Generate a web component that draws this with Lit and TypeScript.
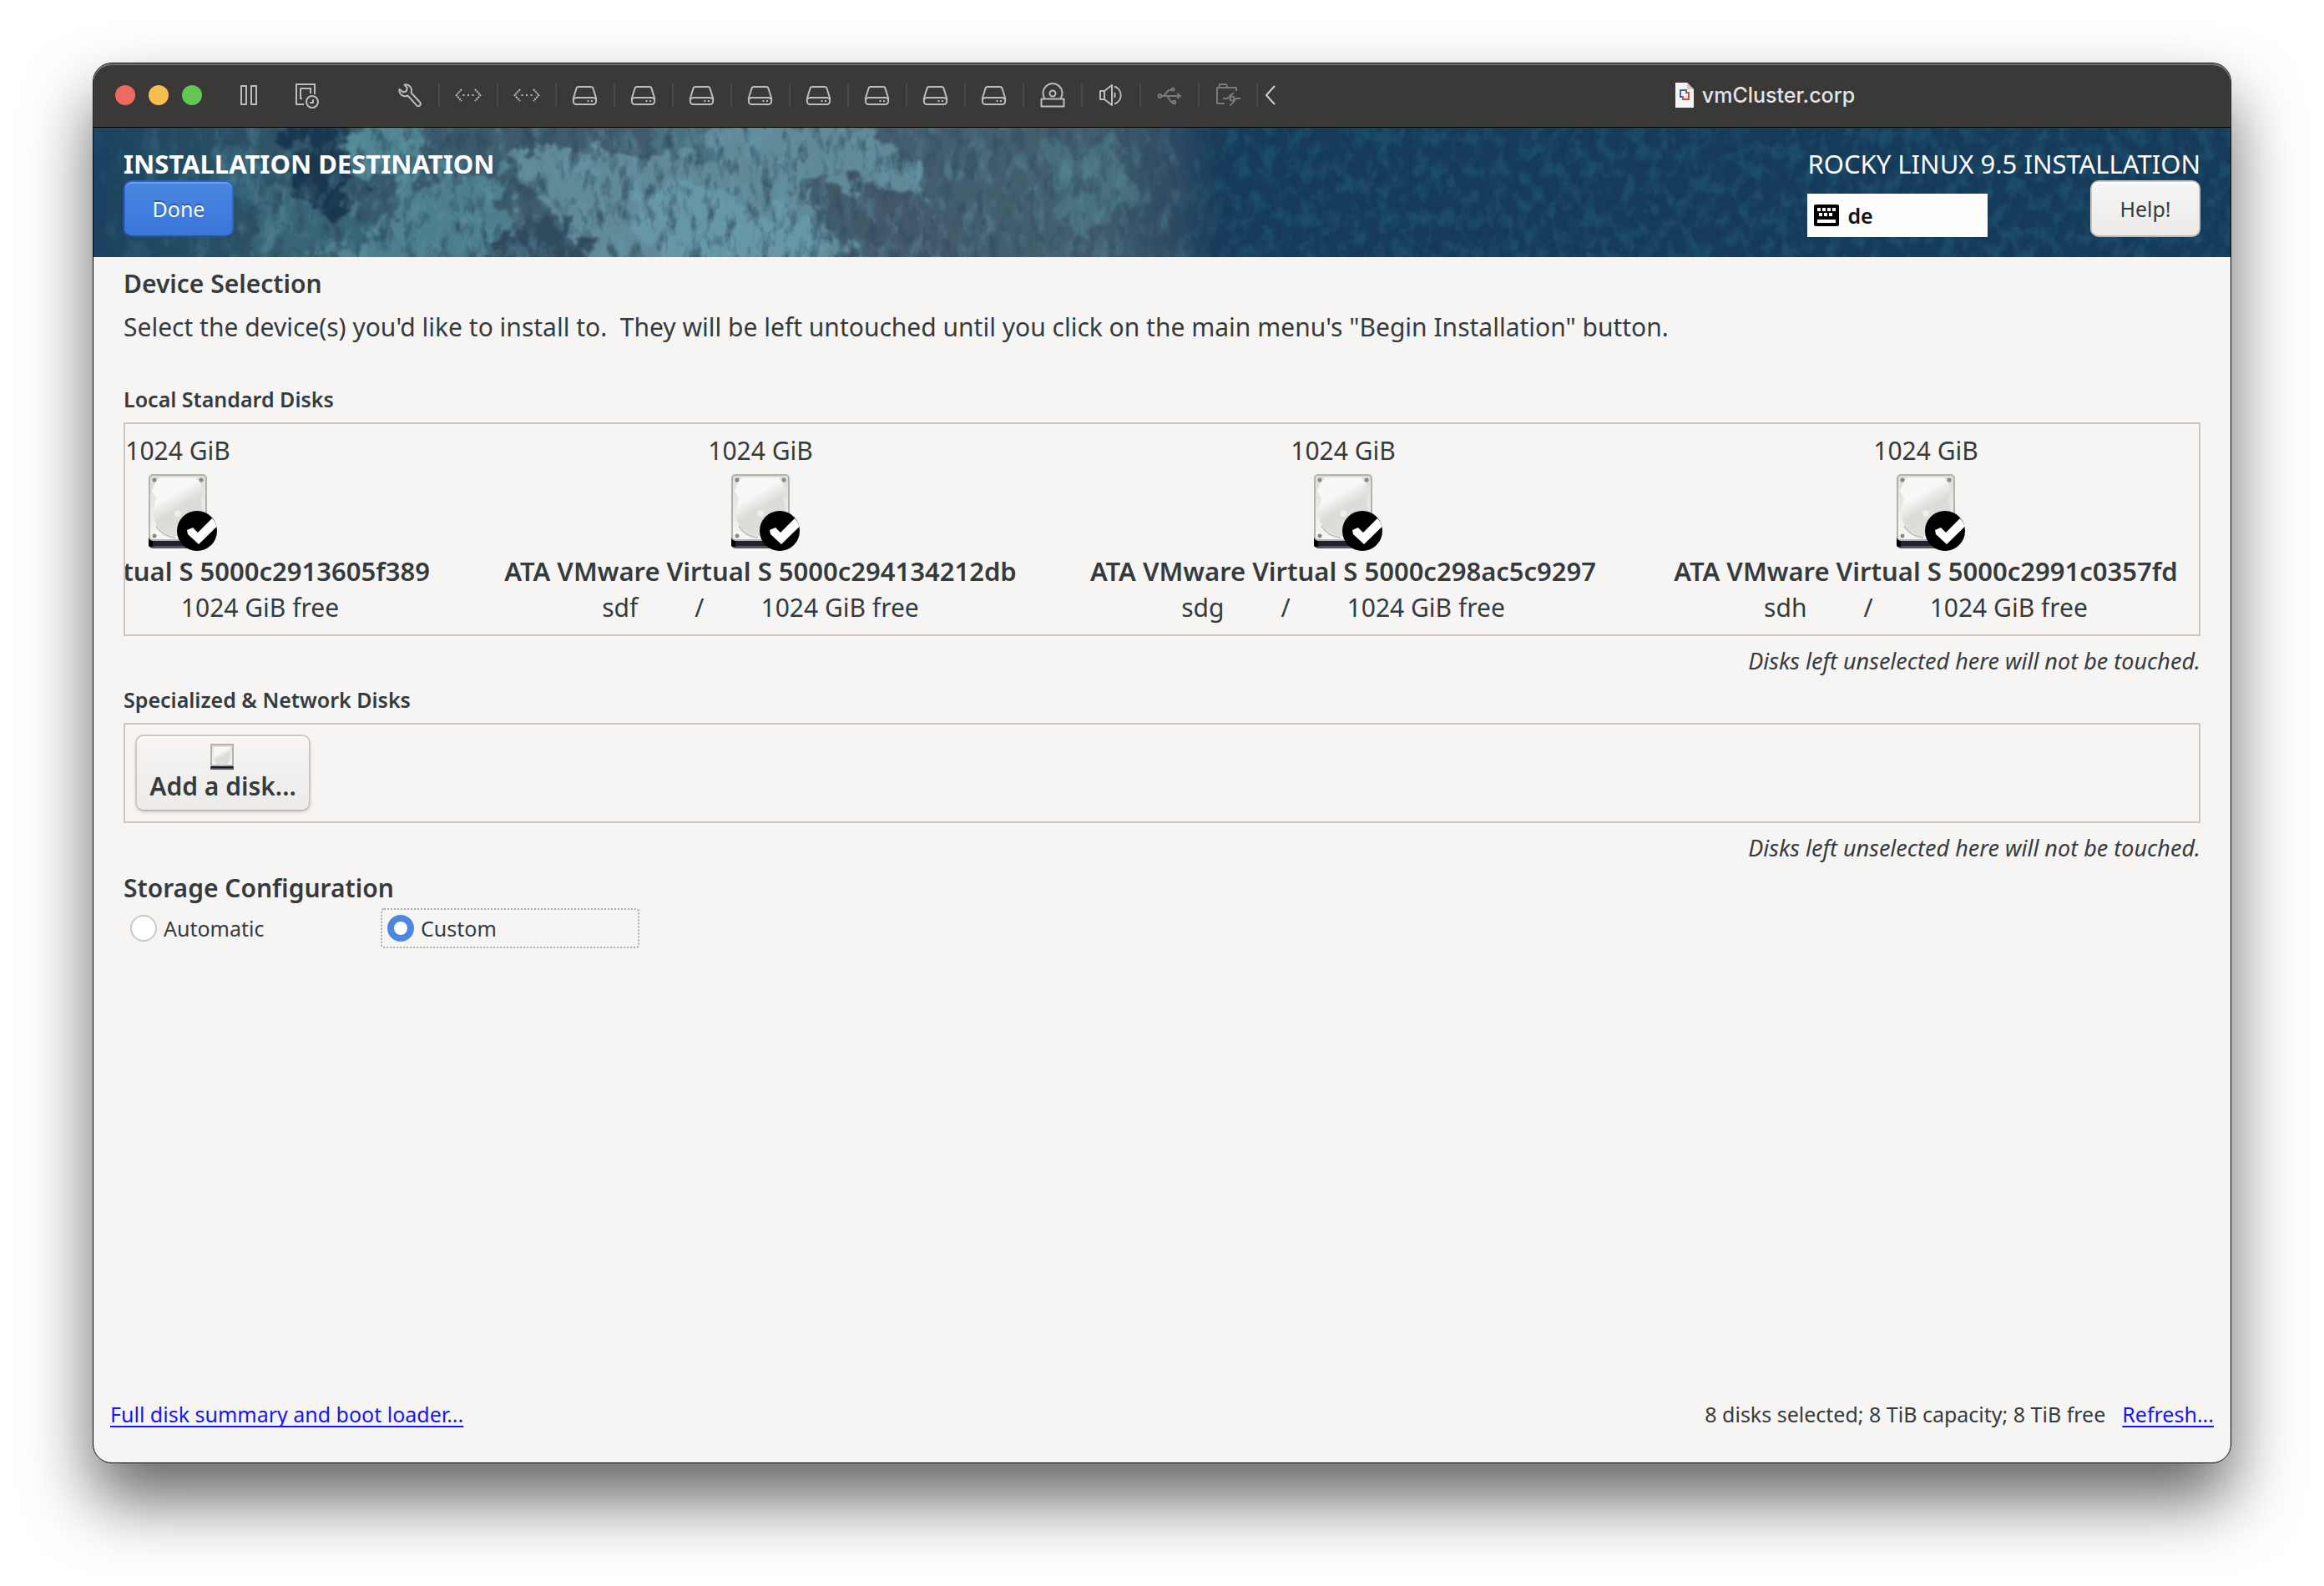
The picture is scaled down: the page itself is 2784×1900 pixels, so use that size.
import { LitElement, html, css, svg, TemplateResult } from "lit";
import { customElement, property, state } from "lit/decorators.js";

interface Disk {
  size: string;
  model: string;
  device: string;
  free: string;
}

const DISKS: Disk[] = [
  { size: "1024 GiB", model: "ATA VMware Virtual S 5000c2913605f389", device: "sde", free: "1024 GiB free" },
  { size: "1024 GiB", model: "ATA VMware Virtual S 5000c294134212db", device: "sdf", free: "1024 GiB free" },
  { size: "1024 GiB", model: "ATA VMware Virtual S 5000c298ac5c9297", device: "sdg", free: "1024 GiB free" },
  { size: "1024 GiB", model: "ATA VMware Virtual S 5000c2991c0357fd", device: "sdh", free: "1024 GiB free" },
];

const ICONS: Record<string, TemplateResult> = {
  pause: svg`<path d="M7 5h6v22H7zM19 5h6v22h-6z"/>`,
  snapshot: svg`<path d="M12 27H3V3h22v12"/><path d="M10 20H8V8h12v6"/><circle cx="22" cy="24" r="7"/><path d="M23 21v4h-4"/>`,
  wrench: svg`<path d="M9.500 3.500a7 7 0 0 1 8 9.500l10.500 11.500a2.600 2.600 0 0 1-3.800 3.800L13.500 16.500a7 7 0 0 1-10-7.500l4.500 3.500 3.800-1.300 1-4z"/>`,
  network: svg`<path d="M8 9l-6.500 7L8 23M24 9l6.500 7L24 23" stroke-dasharray="2 1"/><path d="M9.500 16h2M15 16h2M20.500 16h2"/>`,
  disk: svg`<path d="M8 6h15a2.500 2.500 0 0 1 2.500 2l3.600 11.500v4a3.500 3.500 0 0 1-3.500 3.500H5.400a3.500 3.500 0 0 1-3.500-3.500v-4L5.500 8A2.500 2.500 0 0 1 8 6z"/><path d="M2.500 21c.5-1.500 1.500-2 3-2h20c1.500 0 2.500.5 3 2"/><path d="M18.500 23h2M23 23h2"/>`,
  optical: svg`<path d="M6.500 20a11.500 11.500 0 1 1 19 0"/><circle cx="16" cy="14" r="3.500"/><path d="M2.500 20.500h27v9h-27z"/>`,
  sound: svg`<path d="M3 11h5v10H3zM8 11l9-7v24l-9-7"/><path d="M20.500 13v6"/><path d="M20 5.500a11 11 0 0 1 0 21"/>`,
  usb: svg`<path d="M5 17h22M9 17l6-7h4M13 17l5 7h3"/><circle cx="4.500" cy="17" r="2"/><circle cx="20" cy="9" r="1.500"/><path d="M25 14l4 3-4 3M20 23h3v3h-3z"/>`,
  folder: svg`<path d="M12 26H3V7h2l1-4h8l1.500 4H26v4"/><path d="M3 7h12"/><path d="M10 20h5c3 0 3-6 8-6M31 20h-5c-2 0-3 7-8 8"/><circle cx="21" cy="20" r="2.500"/>`,
};

@customElement("tool-icon")
export class ToolIcon extends LitElement {
  @property() name = "disk";

  static styles = css`
    :host { display: block; width: 32px; height: 32px; }
    .icon { display: block; width: 32px; height: 32px; fill: none; stroke: currentColor; stroke-width: 2; stroke-linejoin: round; }
  `;

  render() {
    return html`<svg class="icon" viewBox="0 0 32 32" aria-hidden="true">${ICONS[this.name]}</svg>`;
  }
}

@customElement("drive-icon")
export class DriveIcon extends LitElement {
  @property({ type: Boolean }) checked = false;

  static styles = css`
    :host { display: block; width: 96px; height: 96px; }
    :host([small]) { width: 32px; height: 32px; }
    .icon { display: block; width: 100%; height: 100%; }
  `;

  private large() {
    return svg`
      <rect x="13" y="6" width="70" height="87" rx="5" fill="#55535a"/>
      <rect x="13" y="78" width="6" height="13" rx="2" fill="#000"/>
      <rect x="18" y="84" width="60" height="6" fill="#241f31"/>
      <rect x="14" y="5" width="68" height="78" rx="4" fill="url(#shell)" stroke="#b4b2ae" stroke-width="2"/>
      <path d="M26 8h44l5 7 4 9-4 9 3 14a30 30 0 0 1-60 3l4-17-5-9 5-12z" fill="url(#cover)"/>
      <path d="M22 66a30 30 0 0 0 23 14" fill="none" stroke="#c4c2be" stroke-width="2"/>
      <circle cx="48" cy="51" r="4" fill="#efeeec"/>
      <circle cx="20" cy="11" r="2.500" fill="#8a8885"/>
      <circle cx="76" cy="11" r="2.500" fill="#8a8885"/>
      <circle cx="20" cy="78" r="2.500" fill="#8a8885"/>
      ${this.checked
        ? svg`<circle cx="71" cy="72" r="24" fill="#000"/>
            <path d="M59 71l7-3 6 6 17-17c3 3 4.500 6 5.500 10L73 88 60 76z" fill="#fff"/>`
        : null}`;
  }

  private little() {
    return svg`
      <rect x="7" y="2" width="28" height="30" fill="#55535a"/>
      <rect x="8" y="28" width="26" height="2" fill="#1a1626"/>
      <rect x="8" y="2" width="26" height="25" fill="url(#shell)" stroke="#b4b2ae" stroke-width="2"/>
      <path d="M11 5h20v13a10 9 0 0 1-20 0z" fill="url(#cover)"/>`;
  }

  render() {
    const small = this.hasAttribute("small");
    return html`<svg class="icon" viewBox=${small ? "6 0 32 32" : "0 0 96 96"} aria-hidden="true">
      <defs>
        <linearGradient id="shell" x1="0" y1="0" x2="0" y2="1">
          <stop offset="0" stop-color="#dedcd9"/><stop offset="1" stop-color="#f8f7f6"/>
        </linearGradient>
        <linearGradient id="cover" x1="0.200" y1="0" x2="0.700" y2="1">
          <stop offset="0.300" stop-color="#f8f8f7"/><stop offset="0.550" stop-color="#dcdbd8"/><stop offset="1" stop-color="#e0dfdc"/>
        </linearGradient>
      </defs>
      ${small ? this.little() : this.large()}
    </svg>`;
  }
}

/* Satellite-style artwork behind the installer header. */
@customElement("banner-art")
export class BannerArt extends LitElement {
  static styles = css`
    :host { display: block; }
    .art { display: block; width: 100%; height: 100%; }
  `;

  render() {
    return html`<svg class="art" viewBox="0 0 2560 155" preserveAspectRatio="none" aria-hidden="true">
      <defs>
        <filter id="sea" x="0" y="0" width="100%" height="100%" color-interpolation-filters="sRGB">
          <feTurbulence type="fractalNoise" baseFrequency="0.065 0.050" numOctaves="3" seed="8"/>
          <feColorMatrix values="0 0 0 0 0.125  0 0 0 0 0.350  0 0 0 0 0.450  3 0 0 0 -1.200"/>
        </filter>
        <filter id="grain" x="0" y="0" width="100%" height="100%" color-interpolation-filters="sRGB">
          <feTurbulence type="fractalNoise" baseFrequency="0.070 0.035" numOctaves="4" seed="21"/>
          <feColorMatrix values="0 0 0 0 0.180  0 0 0 0 0.280  0 0 0 0 0.360  3 0 0 0 -1.450"/>
        </filter>
        <filter id="shine" x="0" y="0" width="100%" height="100%" color-interpolation-filters="sRGB">
          <feTurbulence type="fractalNoise" baseFrequency="0.050 0.030" numOctaves="5" seed="4"/>
          <feColorMatrix values="0 0 0 0 0.400  0 0 0 0 0.620  0 0 0 0 0.680  3.500 0 0 0 -1.650"/>
        </filter>
        <filter id="coast" x="-10%" y="-30%" width="120%" height="160%" color-interpolation-filters="sRGB">
          <feTurbulence type="fractalNoise" baseFrequency="0.030 0.035" numOctaves="6" seed="12"/>
          <feDisplacementMap in="SourceGraphic" scale="80" xChannelSelector="R" yChannelSelector="G"/>
          <feGaussianBlur stdDeviation="1.500"/>
        </filter>
        <linearGradient id="land" x1="0" x2="1" y1="0" y2="0">
          <stop offset="0" stop-color="#1b4160"/>
          <stop offset="0.080" stop-color="#234c63"/>
          <stop offset="0.200" stop-color="#355a6c"/>
          <stop offset="0.500" stop-color="#435c6c"/>
          <stop offset="0.880" stop-color="#425f6e"/>
          <stop offset="0.960" stop-color="#2b4862"/>
          <stop offset="1" stop-color="#163a59" stop-opacity="0"/>
        </linearGradient>
        <linearGradient id="fade" x1="0" x2="1" y1="0" y2="0">
          <stop offset="0" stop-color="#fff" stop-opacity="0.150"/>
          <stop offset="0.150" stop-color="#fff" stop-opacity="0.700"/>
          <stop offset="0.700" stop-color="#fff" stop-opacity="0.700"/>
          <stop offset="0.930" stop-color="#fff" stop-opacity="0.500"/>
          <stop offset="1" stop-color="#fff" stop-opacity="0"/>
        </linearGradient>
        <mask id="landmask"><rect width="1380" height="155" fill="url(#fade)"/></mask>
      </defs>
      <rect width="2560" height="155" fill="#163a59"/>
      <rect width="2560" height="155" filter="url(#sea)" opacity="0.600"/>
      <rect width="1360" height="155" fill="url(#land)"/>
      <g filter="url(#coast)">
        <path d="M145 20l40-5 20 40-10 50-40-30z" fill="#33637a"/>
        <path d="M190 60l90 10 70 60-40 40H190z" fill="#386577"/>
        <path d="M230-20l60 0 40 50-20 60-70 10z" fill="#19374f"/>
        <path d="M310-10h70l20 50-40 30-60-20z" fill="#4f8493"/>
        <path d="M370 60l110 0 30 50-20 60H260l60-40 50-20z" fill="#4d7f8d"/>
        <path d="M490 30l90-10 90 25 90-50h170l60 70 10 30-110-20-50 0 30 40 60 60H610l-20-50-50-30-40-50z" fill="#608a98"/>
        <path d="M640 70l120 10 80 30 70 60H680z" fill="#6797a7"/>
        <path d="M500 120l80-20 20 80H430z" fill="#304b5e"/>
        <path d="M680-20l90 0-30 50-80 0z" fill="#49707f"/>
        <path d="M840 60l110 10 90 50-10 50-100-10-20-50z" fill="#43596a"/>
        <path d="M1150 20l90 10 10 60-70 50-40-40z" fill="#48707d"/>
      </g>
      <g mask="url(#landmask)">
        <rect width="1380" height="155" filter="url(#shine)" opacity="0.550"/>
        <rect width="1380" height="155" filter="url(#grain)"/>
      </g>
    </svg>`;
  }
}

@customElement("app-root")
export class AppRoot extends LitElement {
  @state() private mode: "automatic" | "custom" = "custom";

  static styles = css`
    :host {
      display: flex;
      box-sizing: border-box;
      min-height: 100vh;
      padding: 75px 111px 147px;
      background: #fff;
      color: #353b3d;
      font-family: "Noto Sans", "Open Sans", sans-serif;
      font-size: 30px;
      line-height: 40px;
    }
    * { box-sizing: border-box; }
    button { font: inherit; color: inherit; margin: 0; padding: 0; border: 0; background: none; }
    h1, h2, h3, p { margin: 0; }

    .window {
      flex: 1;
      min-width: 0;
      display: flex;
      flex-direction: column;
      border: 1px solid #0a0a0a;
      border-radius: 23px;
      background: #f6f5f4;
      overflow: hidden;
      box-shadow: 0 44px 80px rgba(0, 0, 0, 0.6);
    }

    .titlebar {
      display: flex;
      align-items: center;
      height: 77px;
      padding-left: 26px;
      background: #3a3937;
      border-bottom: 1px solid #000;
      border-radius: 22px 22px 0 0;
      box-shadow: inset 0 2px 0 #70716e, inset 1px 0 0 #555553, inset -1px 0 0 #555553;
      color: #bebdbb;
    }
    .lights { display: flex; gap: 16px; margin-right: 40px; }
    .light { width: 24px; height: 24px; border-radius: 50%; }
    .close { background: #ed6a5f; }
    .minimize { background: #f5bf4f; }
    .zoom { background: #62c655; }
    .actions { display: flex; gap: 38px; margin-right: 73px; }
    .tools { display: flex; }
    .tool { width: 70px; height: 28px; display: flex; align-items: center; justify-content: center; border-right: 2px solid #4a4947; }
    .dim { color: #7b7a78; }
    .more { margin-left: 8px; width: 14px; height: 24px; }
    .chevron { display: block; width: 14px; height: 24px; fill: none; stroke: #d4d3d1; stroke-width: 2; }
    .caption {
      flex: 1;
      display: flex;
      align-items: center;
      justify-content: center;
      gap: 10px;
      padding-left: 28px;
      font: 500 25px/32px Inter, "Liberation Sans", sans-serif;
      color: #e6e5e3;
    }
    .file { width: 22px; height: 30px; }

    .banner {
      position: relative;
      display: flex;
      justify-content: space-between;
      height: 155px;
      padding: 23px 36px 0;
      color: #fff;
      font-size: 31px;
    }
    .art { position: absolute; inset: 0; }
    .side { position: relative; display: flex; flex-direction: column; align-items: flex-start; }
    .heading { font-size: 31px; font-weight: 700; line-height: 40px; }
    .row { align-self: stretch; display: flex; justify-content: space-between; align-items: flex-end; }
    .btn {
      display: flex;
      align-items: center;
      justify-content: center;
      min-width: 132px;
      height: 68px;
      border: 2px solid #cdc7c2;
      border-bottom-color: #bfb8b1;
      border-radius: 10px;
      background: linear-gradient(#f6f5f4, #edebe9);
      box-shadow: inset 0 2px 0 #fff;
      color: #353b3d;
      font-size: 25px;
    }
    .primary {
      border-color: #2a66c4;
      border-bottom-color: #23559f;
      background: linear-gradient(#4a86e2, #3a76da);
      box-shadow: inset 0 2px 0 #6c9fe8;
      color: #fff;
      text-shadow: 0 -2px 0 rgba(20, 50, 110, 0.5);
    }
    .layout {
      display: flex;
      align-items: center;
      gap: 10px;
      width: 216px;
      height: 52px;
      padding: 0 8px;
      background: #fdfdfd;
      color: #111;
      font-size: 25px;
      font-weight: 600;
    }
    .keyboard { width: 30px; height: 26px; }

    .content { flex: 1; display: flex; flex-direction: column; padding: 12px 36px 0; }
    .section { font-size: 30px; font-weight: 600; line-height: 40px; }
    .lead { margin-top: 12px; white-space: pre-wrap; }
    .group { font-size: 25px; font-weight: 600; line-height: 32px; }
    .first { margin-top: 50px; }
    .next { margin-top: 12px; }
    .note { margin-top: 12px; text-align: right; font-size: 27px; font-style: italic; line-height: 36px; }
    .frame { display: flex; margin-top: 12px; padding: 12px; border: 2px solid #cdc7c2; overflow: hidden; }
    .disks { justify-content: flex-end; gap: 84px; padding-right: 20px; }
    .disk { flex: none; width: 614px; display: flex; flex-direction: column; align-items: center; line-height: 40px; }
    .drive { margin: 4px 0; }
    .model { font-size: 31px; font-weight: 600; white-space: nowrap; }
    .facts { display: flex; gap: 68px; margin-top: 4px; }
    .add {
      flex-direction: column;
      min-width: 210px;
      height: 92px;
      padding: 0 14px;
      font-size: 30px;
      font-weight: 600;
      box-shadow: inset 0 2px 0 #fff, 0 2px 4px rgba(0, 0, 0, 0.1);
    }
    .storage { margin-top: 10px; }
    .modes { display: grid; grid-template-columns: 308px 310px; margin-top: 4px; }
    .mode {
      display: flex;
      align-items: center;
      gap: 8px;
      height: 48px;
      padding: 0 6px;
      border: 2px dashed transparent;
      border-radius: 4px;
      font-size: 25px;
    }
    .focused { border: 2px dotted #a9adad; }
    .radio {
      appearance: none;
      width: 32px;
      height: 32px;
      margin: 0;
      border: 2px solid #cdc7c2;
      border-radius: 50%;
      background: #fff;
      outline: none;
    }
    .radio:checked { border: 8px solid #4b87df; }

    .footer { display: flex; align-items: center; gap: 20px; padding: 0 20px 42px; font-size: 25px; line-height: 32px; }
    .status { margin-left: auto; }
    .link { color: #1414ff; text-decoration: underline 2px; text-underline-offset: 4px; text-decoration-skip-ink: none; }
  `;

  private tool(name: string, label: string, dim = false) {
    return html`<button class="tool ${dim ? "dim" : ""}" aria-label=${label}><tool-icon name=${name}></tool-icon></button>`;
  }

  private radio(value: "automatic" | "custom", label: string) {
    const on = this.mode === value;
    return html`<label class="mode ${on ? "focused" : ""}">
      <input class="radio" type="radio" name="mode" .checked=${on} @change=${() => (this.mode = value)}>${label}
    </label>`;
  }

  render() {
    return html`<main class="window">
      <header class="titlebar">
        <div class="lights">
          <button class="light close" aria-label="Close"></button>
          <button class="light minimize" aria-label="Minimize"></button>
          <button class="light zoom" aria-label="Zoom"></button>
        </div>
        <div class="actions">
          <button aria-label="Pause"><tool-icon name="pause"></tool-icon></button>
          <button aria-label="Snapshots"><tool-icon name="snapshot"></tool-icon></button>
        </div>
        <div class="tools">
          ${this.tool("wrench", "Settings")}
          ${[1, 2].map((n) => this.tool("network", `Network adapter ${n}`))}
          ${[1, 2, 3, 4, 5, 6, 7, 8].map((n) => this.tool("disk", `Hard disk ${n}`))}
          ${this.tool("optical", "CD/DVD")}
          ${this.tool("sound", "Sound")}
          ${this.tool("usb", "USB", true)}
          ${this.tool("folder", "Shared folders", true)}
        </div>
        <button class="more" aria-label="Collapse toolbar">
          <svg class="chevron" viewBox="0 0 14 24"><path d="M12 1L2 12l10 11"/></svg>
        </button>
        <div class="caption">
          <svg class="file" viewBox="0 0 22 30" aria-hidden="true">
            <path d="M0 0h14l8 8v22H0z" fill="#f4f4f4"/>
            <path d="M14 0v8h8z" fill="#c9c9c9"/>
            <path d="M10 17H6V9h7v4" fill="none" stroke="#2f6fb0" stroke-width="2"/>
            <path d="M12 12h4v8H9v-4" fill="none" stroke="#e2452c" stroke-width="2"/>
          </svg>
          <span>vmCluster.corp</span>
        </div>
      </header>

      <section class="banner">
        <banner-art class="art"></banner-art>
        <div class="side">
          <h1 class="heading">INSTALLATION DESTINATION</h1>
          <button class="btn primary">Done</button>
        </div>
        <div class="side">
          <span>ROCKY LINUX 9.5 INSTALLATION</span>
          <div class="row">
            <button class="layout">
              <svg class="keyboard" viewBox="0 0 30 26" aria-hidden="true">
                <rect width="30" height="26" rx="2" fill="#000"/>
                <path d="M4 4h4v4H4zM10 4h4v4h-4zM16 4h4v4h-4zM22 4h4v4h-4zM6 10h4v4H6zM12 10h4v4h-4zM18 10h4v4h-4zM4 18h22v4H4z" fill="#fff"/>
              </svg>
              <span>de</span>
            </button>
            <button class="btn">Help!</button>
          </div>
        </div>
      </section>

      <section class="content">
        <h2 class="section">Device Selection</h2>
        <p class="lead">Select the device(s) you'd like to install to.  They will be left untouched until you click on the main menu's "Begin Installation" button.</p>

        <h3 class="group first">Local Standard Disks</h3>
        <div class="frame disks">
          ${DISKS.map(
            (d) => html`<button class="disk" aria-pressed="true">
              <span>${d.size}</span>
              <drive-icon class="drive" checked></drive-icon>
              <span class="model">${d.model}</span>
              <span class="facts"><span>${d.device}</span><span>/</span><span>${d.free}</span></span>
            </button>`
          )}
        </div>
        <p class="note">Disks left unselected here will not be touched.</p>

        <h3 class="group next">Specialized &amp; Network Disks</h3>
        <div class="frame">
          <button class="btn add"><drive-icon small></drive-icon><span>Add a disk...</span></button>
        </div>
        <p class="note">Disks left unselected here will not be touched.</p>

        <h2 class="section storage">Storage Configuration</h2>
        <div class="modes">${this.radio("automatic", "Automatic")}${this.radio("custom", "Custom")}</div>
      </section>

      <footer class="footer">
        <a class="link" href="#summary">Full disk summary and boot loader...</a>
        <span class="status">8 disks selected; 8 TiB capacity; 8 TiB free</span>
        <a class="link" href="#refresh">Refresh...</a>
      </footer>
    </main>`;
  }
}
